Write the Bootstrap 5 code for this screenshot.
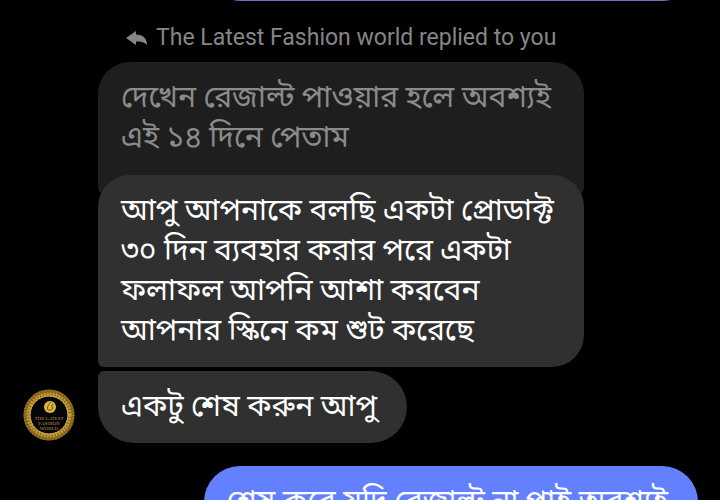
<!DOCTYPE html>
<html lang="bn">
<head>
<meta charset="utf-8">
<meta name="viewport" content="width=device-width, initial-scale=1">
<title>Chat</title>
<link href="https://cdn.jsdelivr.net/npm/bootstrap@5.3.0/dist/css/bootstrap.min.css" rel="stylesheet">
<style>
body { background: #000; font-family: Roboto, "Noto Sans Bengali", "Noto Sans", sans-serif; }
.chat { height: 100vh; padding: 0 22px; }
.bubble { border-radius: 32px; padding: 15px 30px 17px 23px; font-size: 30px; line-height: 40px; }
.sent { background: #6280ff; color: #fff; border-radius: 36px; min-height: 72px; }
.sent-past { width: 73%; margin-top: -71px; background: #766ccb; }
.sent-next { margin-top: 23px; }
.reply-label { color: #868686; font-size: 23px; line-height: 32px; margin: 21px 0 4px 28px; gap: 8px; }
.avatar { width: 54px; }
.thread { gap: 4px; margin-left: 22px; }
.quoted { background: #1e1e1e; color: #8b8b8b; padding-bottom: 37px; border-bottom-left-radius: 6px; border-bottom-right-radius: 6px; }
.answer { background: #303030; color: #fff; margin-top: -23px; border-bottom-left-radius: 6px; }
.follow { background: #303030; color: #fff; border-radius: 6px 36px 36px 36px; }
</style>
<script src="https://cdn.jsdelivr.net/npm/bootstrap@5.3.0/dist/js/bootstrap.bundle.min.js"></script>
</head>
<body>
<main class="chat overflow-hidden d-flex flex-column">
  <div class="bubble sent sent-past align-self-end flex-shrink-0"></div>
  <section class="d-flex align-items-end flex-shrink-0">
    <svg class="avatar flex-shrink-0" viewBox="0 0 54 54" role="img" aria-label="The Latest Fashion World">
      <circle cx="27" cy="26" r="22" fill="none" stroke="#80601d" stroke-width="7"/>
      <circle cx="27" cy="26" r="24" fill="none" stroke="#a07a2c" stroke-width="3" stroke-dasharray="1 2"/>
      <circle cx="27" cy="26" r="21" fill="none" stroke="#c99b38" stroke-width="3" stroke-dasharray="2 1"/>
      <circle cx="27" cy="26" r="19" fill="#050503" stroke="#f0c957"/>
      <circle cx="28" cy="18" r="6" fill="#dfb83c"/>
      <path d="M29 13q-5 5-3 8 4 1 5-2-3-2 0-4" fill="none" stroke="#6c4d10"/>
      <g fill="#b5975a" font-family="Liberation Serif, serif" font-size="5" text-anchor="middle">
        <text x="27" y="31">THE LATEST</text><text x="27" y="36">FASHION</text><text x="27" y="41">WORLD</text>
      </g>
    </svg>
    <div class="thread d-flex flex-column align-items-start">
      <div class="reply-label d-flex align-items-center" lang="en">
        <svg width="22" height="18" viewBox="0 0 22 18" aria-hidden="true"><path d="M0 9 10 2v3.500c7 0 11 4 11 10.500-3-3-6-3.500-11-3.500V16Z" fill="#868686"/></svg>
        <span>The Latest Fashion world replied to you</span>
      </div>
      <div class="bubble quoted align-self-stretch">দেখেন রেজাল্ট পাওয়ার হলে অবশ্যই<br>এই ১৪ দিনে পেতাম</div>
      <div class="bubble answer align-self-stretch">আপু আপনাকে বলছি একটা প্রোডাক্ট<br>৩০ দিন ব্যবহার করার পরে একটা<br>ফলাফল আপনি আশা করবেন<br>আপনার স্কিনে কম শুট করেছে</div>
      <div class="bubble follow">একটু শেষ করুন আপু</div>
    </div>
  </section>
  <div class="bubble sent sent-next align-self-end flex-shrink-0">শেষ করে যদি রেজাল্ট না পাই অবশ্যই</div>
</main>
</body>
</html>
